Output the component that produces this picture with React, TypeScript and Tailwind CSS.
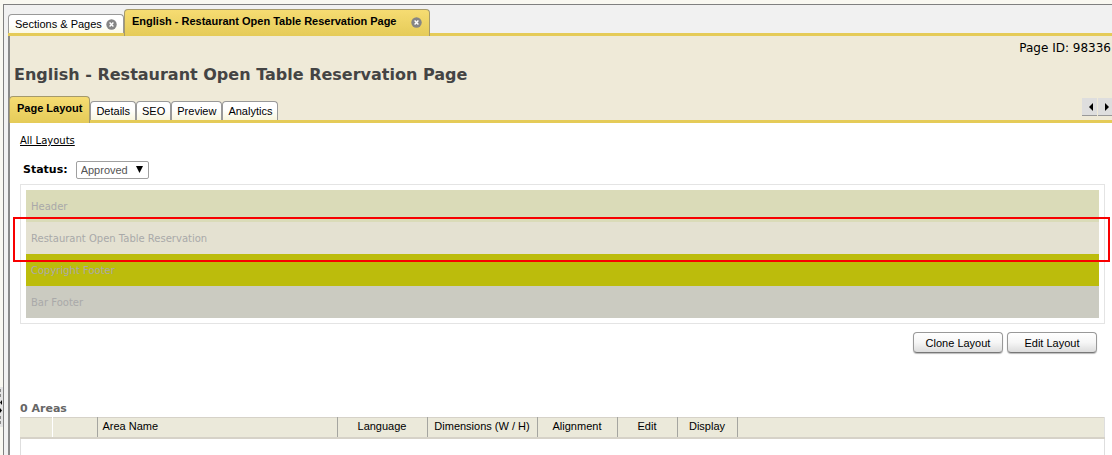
import React, { useState } from "react";

const SANS = "font-['Liberation_Sans',Arial,sans-serif]";

const pageTabs = ["Page Layout", "Details", "SEO", "Preview", "Analytics"];

const layoutRows = [
  { name: "Header", tone: "bg-[#dadbb8]" },
  { name: "Restaurant Open Table Reservation", tone: "bg-[#e4e1d1]", highlighted: true },
  { name: "Copyright Footer", tone: "bg-[#bcbc0c]" },
  { name: "Bar Footer", tone: "bg-[#cbcbc1]" },
];

const columns = [
  { label: "", width: "w-8", align: "text-center", edge: "border-white" },
  { label: "", width: "w-[45px]", align: "text-center", edge: "border-[#a5a5a0]" },
  { label: "Area Name", width: "w-60", align: "text-left", edge: "border-[#a5a5a0]" },
  { label: "Language", width: "w-[90px]", align: "text-center", edge: "border-[#a5a5a0]" },
  { label: "Dimensions (W / H)", width: "w-[110px]", align: "text-center", edge: "border-[#a5a5a0]" },
  { label: "Alignment", width: "w-20", align: "text-center", edge: "border-[#a5a5a0]" },
  { label: "Edit", width: "w-[60px]", align: "text-center", edge: "border-[#a5a5a0]" },
  { label: "Display", width: "w-[60px]", align: "text-center", edge: "border-[#a5a5a0]" },
  { label: "", width: "w-auto", align: "text-center", edge: "border-[#dedede]" },
];

function CloseButton({ label }: { label: string }) {
  return (
    <button type="button" aria-label={label} className="shrink-0">
      <svg width="11" height="11" viewBox="0 0 11 11" className="block">
        <circle cx="5.5" cy="5.5" r="5.2" fill="#858585" />
        <path d="M3.6 3.6 7.4 7.4M7.4 3.6 3.6 7.4" stroke="#fff" strokeWidth="1.4" />
      </svg>
    </button>
  );
}

function WindowTabs() {
  return (
    <div className="ml-1 flex h-[31px] items-end border-b-[3px] border-[#e5cb58]">
      <div className="flex h-[19px] w-[116px] items-center justify-between rounded-t border border-b-0 border-[#999] bg-linear-to-b from-white from-50% to-[#fbf9e4] pr-1.5 pl-1.5 text-[11px]">
        <button type="button">Sections &amp; Pages</button>
        <CloseButton label="Close Sections & Pages" />
      </div>
      <div className="-mb-[3px] flex h-[27px] w-[306px] items-start justify-between rounded-t border border-b-0 border-[#a59a6c] bg-linear-to-b from-[#f6dc72] to-[#e5cb58] pt-[3px] pr-[7px] pl-[7px] text-[11px] leading-4 font-bold">
        <button type="button">English - Restaurant Open Table Reservation Page</button>
        <span className="pt-[3px]">
          <CloseButton label="Close English - Restaurant Open Table Reservation Page" />
        </span>
      </div>
    </div>
  );
}

function PageTabs() {
  const [active, setActive] = useState("Page Layout");
  return (
    <div className="flex h-[27px] items-end justify-between border-b-[3px] border-[#e5cb58]">
      <div role="tablist" className="-ml-px flex items-end">
        {pageTabs.map((tab) =>
          tab === active ? (
            <button
              key={tab}
              type="button"
              role="tab"
              aria-selected="true"
              className="-mb-[3px] h-[27px] rounded-t border border-b-0 border-[#a59a6c] bg-linear-to-b from-[#f6dc72] to-[#e5cb58] px-[7px] pb-1 text-[11px] font-bold"
            >
              {tab}
            </button>
          ) : (
            <button
              key={tab}
              type="button"
              role="tab"
              aria-selected="false"
              onClick={() => setActive(tab)}
              className="h-[19px] rounded-t border border-b-0 border-[#999] bg-linear-to-b from-white from-40% to-[#f8f5dc] px-[5px] text-[11px]"
            >
              {tab}
            </button>
          ),
        )}
      </div>
      <div className="mb-1 flex gap-px">
        <button type="button" aria-label="Scroll tabs left" className="flex h-[18px] w-[15px] items-center justify-end border-b border-[#999] bg-[#dedede] pr-1">
          <svg width="4" height="8" viewBox="0 0 4 8"><path d="M4 0v8L0 4z" /></svg>
        </button>
        <button type="button" aria-label="Scroll tabs right" className="flex h-[18px] w-3.5 items-center border-b border-[#999] bg-[#dedede] pl-[7px]">
          <svg width="4" height="8" viewBox="0 0 4 8"><path d="M0 0v8l4-4z" /></svg>
        </button>
      </div>
    </div>
  );
}

function StatusField() {
  return (
    <div className="mt-3 flex items-center gap-2 pl-[3px]">
      <label htmlFor="status" className="text-[11px] leading-[18px] font-bold">
        Status:
      </label>
      <span className="relative">
        <select
          id="status"
          defaultValue="Approved"
          className={`block h-[18px] w-[73px] appearance-none rounded-xs border border-[#a0a0a0] bg-white pl-1 text-[11px] leading-4 text-[#555] ${SANS}`}
        >
          <option>Approved</option>
          <option>Draft</option>
        </select>
        <svg width="7" height="7" viewBox="0 0 7 7" className="pointer-events-none absolute top-[5px] right-1.5">
          <path d="M0 0h7L3.5 7z" />
        </svg>
      </span>
    </div>
  );
}

function LayoutPreview() {
  return (
    <ul className="mt-[5px] border border-[#e4e4e4] p-[5px] text-[10px] text-[#a9a9a9]">
      {layoutRows.map((row) => (
        <li key={row.name} className={`relative flex h-8 items-center px-[5px] ${row.tone}`}>
          {row.name}
          {row.highlighted && (
            <span className="pointer-events-none absolute -top-[5px] -right-[11px] -bottom-2 -left-[13px] z-10 border-2 border-[#f80000]" />
          )}
        </li>
      ))}
    </ul>
  );
}

function ActionButton({ children }: { children: React.ReactNode }) {
  return (
    <button
      type="button"
      className={`h-[21px] w-[90px] rounded border border-[#999] border-b-[#777] bg-linear-to-b from-white via-[#f6f6f6] to-[#dcdcdc] text-[11px] leading-4 shadow-[0_1px_1px_#bbb] ${SANS}`}
    >
      {children}
    </button>
  );
}

function AreasTable() {
  return (
    <section className="mt-[49px] flex flex-1 flex-col">
      <h2 className="text-[11px] leading-[14px] font-bold text-[#666]">0 Areas</h2>
      <div className="mt-px flex-1 border-x border-[#dedede]">
        <table className={`-mx-px w-[calc(100%+2px)] table-fixed border-collapse text-[11px] ${SANS}`}>
          <thead>
            <tr className="h-5 border-t border-b-2 border-[#d6d2c8] bg-[#ebe9da]">
              {columns.map((col, i) => (
                <th key={i} scope="col" className={`border-r px-[5px] pb-0.5 leading-4 font-normal ${col.width} ${col.align} ${col.edge}`}>
                  {col.label}
                </th>
              ))}
            </tr>
          </thead>
          <tbody />
        </table>
      </div>
    </section>
  );
}

function SplitterHandle() {
  return (
    <button type="button" aria-label="Toggle side panel" className="absolute top-[387px] left-0 h-10 w-[3px] bg-[#e4e4e4]">
      <svg width="3" height="40" viewBox="0 0 3 40" className="block">
        <path d="M0 2h1v3H0zM0 7h1v3H0zM0 29h1v3H0zM0 34h1v3H0z" fill="#888" />
        <path d="M2 13v5L0 15.5zM0 21v5l2-2.5z" />
      </svg>
    </button>
  );
}

export default function App() {
  return (
    <div className="relative flex min-h-screen flex-col bg-[#f9f8f1] pt-1 pl-[3px] font-['DejaVu_Sans',Verdana,sans-serif] text-black">
      <SplitterHandle />
      <div className="flex flex-1 flex-col border-t border-l border-[#808080] bg-[#f1f1f1]">
        <div className={SANS}>
          <WindowTabs />
        </div>
        <main className="ml-1 flex flex-1 flex-col border-l-2 border-[#8a8a8a] bg-white">
          <header className="bg-[#efead8]">
            <p className="pt-[5px] pr-px text-right text-xs leading-[14px]">Page ID: 98336</p>
            <h1 className="mt-2.5 pl-1 text-base leading-5 font-bold text-[#444]">
              English - Restaurant Open Table Reservation Page
            </h1>
            <div className={`pt-[11px] ${SANS}`}>
              <PageTabs />
            </div>
          </header>
          <div className="flex flex-1 flex-col pt-2 pr-[7px] pl-2.5">
            <div className="leading-4">
              <a href="#layouts" className="text-[10px] underline">
                All Layouts
              </a>
            </div>
            <StatusField />
            <LayoutPreview />
            <div className="mt-2 flex justify-end gap-1 pr-2">
              <ActionButton>Clone Layout</ActionButton>
              <ActionButton>Edit Layout</ActionButton>
            </div>
            <AreasTable />
          </div>
        </main>
      </div>
    </div>
  );
}
